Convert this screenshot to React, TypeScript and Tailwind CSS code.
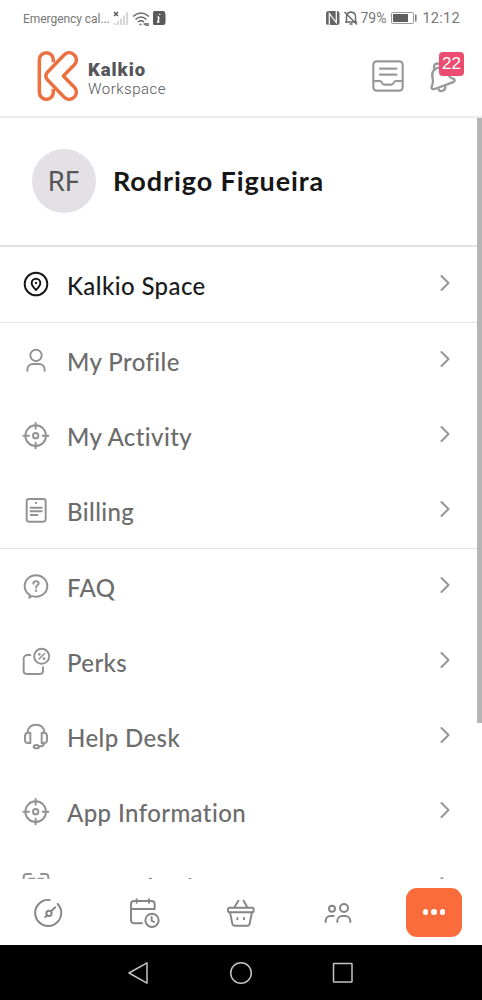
import type { ReactNode } from "react";

type IconProps = { children: ReactNode };

// Icons are drawn on a 90 unit grid, three units to a pixel
function Icon({ children }: IconProps) {
  return (
    <svg
      viewBox="0 0 90 90"
      className="h-[30px] w-[30px] shrink-0"
      fill="none"
      stroke="currentColor"
      strokeWidth="5.8"
      strokeLinecap="round"
      strokeLinejoin="round"
    >
      {children}
    </svg>
  );
}

const PinIcon = () => (
  <Icon>
    <circle cx="45" cy="45" r="34" />
    <path d="M45 63C39 57 32 50 32 42a13 13 0 0 1 26 0c0 8-7 15-13 21z" />
    <circle cx="45" cy="42" r="3.5" fill="currentColor" stroke="none" />
  </Icon>
);

const UserIcon = () => (
  <Icon>
    <circle cx="45" cy="31" r="17" />
    <path d="M19 77v-3c0-10 7-17 17-17h18c10 0 17 7 17 17v3" />
  </Icon>
);

const TargetIcon = () => (
  <Icon>
    <circle cx="44" cy="47" r="31" />
    <circle cx="44" cy="47" r="8" />
    <path d="M44 9v17M44 68v17M7 47h17M65 47h17" />
  </Icon>
);

const BillIcon = () => (
  <Icon>
    <rect x="17" y="12" width="57" height="68" rx="7" />
    <path d="M29 38h33M29 49h33M29 60h20" />
    <circle cx="45" cy="24" r="3.5" fill="currentColor" stroke="none" />
  </Icon>
);

const FaqIcon = () => (
  <Icon>
    <path d="M25 80l1-9C17 66 11 56 11 45c0-18 15-32 34-32s34 14 34 32-15 32-34 32c-5 0-9 0-12-2z" />
    <path d="M37 38c0-10 16-10 16-1 0 6-8 6-8 13" />
    <circle cx="45" cy="59" r="3.5" fill="currentColor" stroke="none" />
  </Icon>
);

const PerksIcon = () => (
  <Icon>
    <path d="M28 27h-9c-6 0-11 5-11 11v36c0 6 5 10 11 10h36c6 0 11-4 11-10V64" />
    <circle cx="62" cy="31" r="22.500" />
    <path d="M70 23L54 39" strokeWidth="4.5" />
    <circle cx="55" cy="25" r="4" fill="currentColor" stroke="none" />
    <circle cx="69" cy="38" r="4" fill="currentColor" stroke="none" />
  </Icon>
);

const HeadsetIcon = () => (
  <Icon>
    <path d="M20 34C20 20 31 11 45 11s25 9 25 23" />
    <path d="M28 35h-6c-6 0-10 4-10 10v13c0 5 4 8 9 8h7zM62 35h6c6 0 10 4 10 10v13c0 5-4 8-9 8h-7z" />
    <path d="M69 67c0 6-4 9-10 9h-6" />
    <ellipse cx="46" cy="77" rx="8" ry="5" />
  </Icon>
);

const ScanIcon = () => (
  <Icon>
    <path d="M8 22v-4q0-9 9-9h13M60 9h13q9 0 9 9v4M8 66v5q0 9 9 9h13M60 80h13q9 0 9-9v-5" />
    <path d="M25 23h15M53 23h13M25 45h41M25 63h41" />
  </Icon>
);

const Chevron = () => (
  <svg
    viewBox="0 0 12 18"
    className="mr-[31px] mb-1 h-[18px] w-3 shrink-0"
    fill="none"
    stroke="#969696"
    strokeWidth="2.1"
    strokeLinecap="round"
    strokeLinejoin="round"
  >
    <path d="M2.500 2l7 7-7 7" />
  </svg>
);

type Item = { label: string; icon: ReactNode };

const account: Item[] = [
  { label: "My Profile", icon: <UserIcon /> },
  { label: "My Activity", icon: <TargetIcon /> },
  { label: "Billing", icon: <BillIcon /> },
];

const support: Item[] = [
  { label: "FAQ", icon: <FaqIcon /> },
  { label: "Perks", icon: <PerksIcon /> },
  { label: "Help Desk", icon: <HeadsetIcon /> },
  { label: "App Information", icon: <TargetIcon /> },
  { label: "Screen log in", icon: <ScanIcon /> },
];

function Row({ item, active = false }: { item: Item; active?: boolean }) {
  return (
    <div className="flex h-[75px] shrink-0 items-center pl-[21px]">
      <span className={`mb-[2px] ${active ? "text-[#161616]" : "text-[#929292]"}`}>{item.icon}</span>
      <span
        className={`ml-4 flex-1 whitespace-nowrap pt-[2px] text-2xl leading-[30px] font-medium tracking-[0.4px] ${
          active ? "text-[#1c1c1c]" : "text-[#6c6c6c]"
        }`}
      >
        {item.label}
      </span>
      <Chevron />
    </div>
  );
}

function StatusBar() {
  return (
    <div className="flex h-9 shrink-0 items-center pr-[22px] pl-[23px] font-['Roboto',sans-serif] text-[#777]">
      <span className="w-[88px] whitespace-nowrap pt-px text-[12px] tracking-[-0.05px]">Emergency cal...</span>
      <svg viewBox="0 0 54 26" className="ml-[2px] h-[26px] w-[54px]" fill="none">
        <path d="M1 7l4 4M5 7l-4 4" stroke="#555" strokeWidth="1.4" />
        <path d="M2 18v2M5 16v4M8 13.5v6.5M11 10.500v9.500M14 7v13" stroke="#c9c9c9" strokeWidth="1.5" />
        <path d="M20 11.500q8-7 16 0M22.500 14.500q5.500-5 11 0M25 17q3-2.500 6 0" stroke="#666" strokeWidth="1.6" />
        <path d="M26.500 19.500h2M30.500 19l2 0M33 18v3M35 18v3" stroke="#666" strokeWidth="1.5" />
        <path d="M51 8q2 0 2 2v7q0 2-2 2" fill="#aaa" />
        <rect x="40" y="6" width="12" height="14" rx="1.500" fill="#5a5a5a" />
        <path d="M46.800 8.800l-.2 1M46 12l-1 5M44.500 12h1.500M44 17h2.500" stroke="#fff" strokeWidth="1.500" />
      </svg>
      <svg viewBox="0 0 34 20" className="ml-auto h-5 w-[34px]" fill="none">
        <rect x="0" y="3" width="13.500" height="14" rx="2.500" fill="#666" />
        <path d="M3.300 17V5.500l7 9V3" stroke="#fff" strokeWidth="1.200" />
        <path d="M19 14h12M20.500 13.500V8.500q0-4 4.500-4.500 4.500.5 4.500 4.500v5M23.500 16h3M18.500 4l12.500 12.500" stroke="#666" strokeWidth="1.400" />
      </svg>
      <span className="pt-px text-[14px] tracking-[0px]">79%</span>
      <svg viewBox="0 0 26 12" className="ml-[5px] h-3 w-[26px]" fill="none">
        <rect x=".5" y=".5" width="22" height="11" rx="1" stroke="#999" />
        <rect x="2" y="2" width="15" height="8" fill="#5f5f5f" />
        <path d="M24.800 2.500v7" stroke="#777" strokeWidth="1.500" />
      </svg>
      <span className="ml-[5px] pt-px text-[14.500px] tracking-[0.3px]">12:12</span>
    </div>
  );
}

function Header() {
  return (
    <header className="flex h-20 shrink-0 items-center pr-[18px] pl-[37px]">
      <svg
        viewBox="114 150 126 156"
        className="h-[52px] w-[42px]"
        fill="none"
        stroke="#ec7142"
        strokeWidth="10.500"
        strokeLinecap="butt"
        strokeLinejoin="round"
      >
        <path d="M163 187v-8a21 21 0 0 0-42 0v98a21 21 0 0 0 42 0v-10" />
        <path d="M146 216l49-51c8-8 20-9 29-2 10 8 11 22 2 31l-33 34 33 34c9 9 8 23-2 31-9 7-21 6-29-2l-49-51q-11-12 0-24z" />
      </svg>
      <div className="ml-[9px] pt-[8px] text-[#55565a]">
        <div className="font-['Roboto',sans-serif] text-[18.500px] leading-[19px] font-black tracking-[0.95px]">Kalkio</div>
        <div className="font-['Roboto',sans-serif] text-[15px] leading-[19px] font-light tracking-[0.500px]">
          Workspace
        </div>
      </div>
      <svg
        viewBox="0 0 96 96"
        className="ml-auto h-8 w-8 text-[#999]"
        fill="none"
        stroke="currentColor"
        strokeWidth="6.500"
        strokeLinecap="round"
        strokeLinejoin="round"
      >
        <rect x="4" y="4" width="88" height="88" rx="10" />
        <path d="M24 26h49M24 44h49M4 63h19c9 0 5 11 14 11h21c9 0 5-11 14-11h20" />
      </svg>
      <div className="relative ml-[23px] h-10 w-[37px] text-[#999]">
        <svg
          viewBox="0 0 111 120"
          className="h-10 w-[37px]"
          fill="none"
          stroke="currentColor"
          strokeWidth="7"
          strokeLinecap="round"
          strokeLinejoin="round"
        >
          <path d="M22 37a10 10 0 1 1 18-9" />
          <path d="M40 34C20 36 12 50 17 67c3 12 0 18-2 22-4 8 0 12 8 10l54-20c8-3 8-9 1-11-11-3-14-8-18-20" />
          <path d="M35 100c3 9 20 6 20-7" />
        </svg>
        <span className="absolute -top-1 right-0 flex h-6 w-[25px] items-center justify-center rounded-[4px] bg-[#ec4c70] font-['Liberation_Sans',sans-serif] text-[17px] text-white">
          22
        </span>
      </div>
    </header>
  );
}

const tabs: ReactNode[] = [
  <Icon key="dashboard">
    <path d="M47 6A39 39 0 1 0 71 18" />
    <circle cx="45" cy="46" r="8" />
    <path d="M51 40l13-12M39 52l-5 5" />
  </Icon>,
  <Icon key="bookings">
    <path d="M74 33V18c0-5-4-9-9-9H12C7 9 3 13 3 18v48c0 6 5 10 11 10h22M3 33h71M20 4v10M57 4v10" />
    <circle cx="66" cy="67" r="20" />
    <path d="M65 57v11l7 4" />
  </Icon>,
  <Icon key="shop">
    <rect x="6" y="29" width="77" height="14" rx="4" />
    <path d="M12 43l7 34q1 6 7 6h38q6 0 7-6l7-34M26 26L37 8M63 26L53 8M34 60v4M54 60v4" />
  </Icon>,
  <Icon key="community">
    <circle cx="27" cy="32" r="9" />
    <circle cx="63" cy="30" r="12" />
    <path d="M8 72v-4c0-8 6-14 14-14h10M43 72v-3c0-9 7-15 15-15h9c8 0 15 6 15 15v3" />
  </Icon>,
];

export default function App() {
  return (
    <div className="flex h-[1000px] w-full flex-col overflow-hidden bg-white font-['Lato',sans-serif]">
      <StatusBar />
      <Header />

      <main className="relative flex min-h-0 flex-1 flex-col overflow-hidden border-t-2 border-[#ececec]">
        <div className="flex h-[127px] shrink-0 items-center pb-[2px] pl-8">
          <div className="flex h-16 w-16 items-center justify-center rounded-full bg-[#e3e1e5] pr-[2px] pb-px font-['Noto_Sans',sans-serif] text-[28px] tracking-[-0.5px] text-[#555]">
            RF
          </div>
          <h1 className="ml-[17px] text-[27px] leading-8 font-bold tracking-[0.9px] whitespace-nowrap text-[#161616]">
            Rodrigo Figueira
          </h1>
        </div>
        <div className="shrink-0 border-y border-t-2 border-[#e3e3e3]">
          <Row active item={{ label: "Kalkio Space", icon: <PinIcon /> }} />
        </div>
        <div className="shrink-0 border-b border-[#e3e3e3]">
          {account.map((item) => (
            <Row key={item.label} item={item} />
          ))}
        </div>
        <div className="shrink-0">
          {support.map((item) => (
            <Row key={item.label} item={item} />
          ))}
        </div>
        {/* scroll thumb */}
        <div className="absolute -top-[2px] right-0 h-[607px] w-[5px] bg-[#b5b5b5]" />
      </main>

      <nav className="grid h-[66px] shrink-0 grid-cols-5 items-center bg-white text-[#858585]">
        {tabs.map((tab, i) => (
          <div key={i} className="flex justify-center pt-px pl-px">
            {tab}
          </div>
        ))}
        <div className="flex justify-center">
          <div className="flex h-[49px] w-14 items-center justify-center gap-[3px] rounded-[11px] bg-[#fa6c3b]">
            <span className="h-[5.500px] w-[5.500px] rounded-full bg-white" />
            <span className="h-[5.500px] w-[5.500px] rounded-full bg-white" />
            <span className="h-[5.500px] w-[5.500px] rounded-full bg-white" />
          </div>
        </div>
      </nav>

      <div className="flex h-[55px] shrink-0 items-center justify-center gap-[78px] bg-black">
        <svg viewBox="0 0 24 24" className="h-6 w-6" fill="none" stroke="#c4c4c4" strokeWidth="1.500" strokeLinejoin="round">
          <path d="M2 12L20 1.800v20.400z" />
        </svg>
        <svg viewBox="0 0 24 24" className="h-6 w-6" fill="none" stroke="#c4c4c4" strokeWidth="1.500">
          <circle cx="12" cy="12" r="10.300" />
        </svg>
        <svg viewBox="0 0 24 24" className="h-6 w-6" fill="none" stroke="#c4c4c4" strokeWidth="1.500">
          <rect x="2.500" y="2.500" width="18.500" height="18.500" rx=".5" />
        </svg>
      </div>
    </div>
  );
}
